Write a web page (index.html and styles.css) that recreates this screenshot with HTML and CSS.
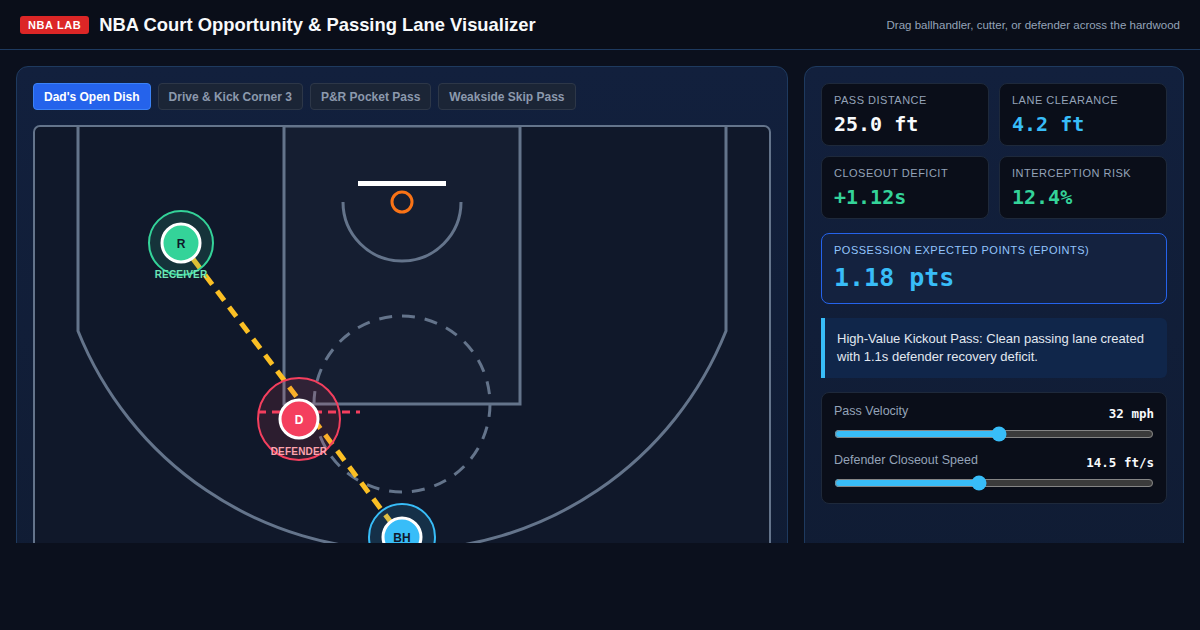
FILE: index.html
```html
<!DOCTYPE html>
<html>
  <head>
    <meta charset="UTF-8">
    <title>NBA Lab | Court Opportunity &amp; Passing Lane Visualizer</title>
    <link rel="stylesheet" href="styles.css">
  </head>
  <body>
    <div class="topbar">
      <div class="brand">
        <span class="badge">NBA LAB</span>
        <h1>NBA Court Opportunity &amp; Passing Lane Visualizer</h1>
      </div>
      <div class="hint">Drag ballhandler, cutter, or defender across the hardwood</div>
    </div>

    <div class="main">
      <div class="panel court-panel">
        <div class="tabs">
          <button class="tab active">Dad's Open Dish</button>
          <button class="tab">Drive &amp; Kick Corner 3</button>
          <button class="tab">P&amp;R Pocket Pass</button>
          <button class="tab">Weakside Skip Pass</button>
        </div>

        <svg class="court" width="738" height="690" viewBox="0 0 738 690">
          <rect x="1" y="1" width="736" height="688" rx="6" fill="#10182a" stroke="#64748b" stroke-width="2"/>
          <!-- paint -->
          <rect x="251" y="1" width="236" height="278" fill="#151e31" stroke="#64748b" stroke-width="3"/>
          <!-- three point line -->
          <path d="M45 1 L45 206 A349 349 0 0 0 693 206 L693 1" fill="none" stroke="#64748b" stroke-width="3"/>
          <!-- free throw circle -->
          <circle cx="369" cy="279" r="88" fill="none" stroke="#64748b" stroke-width="3" stroke-dasharray="13 10"/>
          <!-- restricted area -->
          <path d="M310 77 A59 59 0 0 0 428 77" fill="none" stroke="#64748b" stroke-width="3"/>
          <rect x="325" y="56" width="88" height="5" fill="#ffffff"/>
          <circle cx="369" cy="77" r="10" fill="none" stroke="#f97316" stroke-width="3"/>

          <!-- passing lane -->
          <line x1="148" y1="118" x2="369" y2="412" stroke="#fbbf24" stroke-width="5" stroke-dasharray="12 8"/>

          <!-- receiver -->
          <circle cx="148" cy="118" r="32" fill="rgba(52,211,153,0.15)" stroke="#34d399" stroke-width="2"/>
          <circle cx="148" cy="118" r="19" fill="#34d399" stroke="#ffffff" stroke-width="3"/>
          <text class="tok dark" x="148" y="119">R</text>
          <text class="tag" x="148" y="153" fill="#6ee7b7">RECEIVER</text>

          <!-- defender -->
          <circle cx="266" cy="294" r="41" fill="rgba(244,63,94,0.12)" stroke="#f43f5e" stroke-width="2"/>
          <line x1="225" y1="287" x2="327" y2="287" stroke="#f43f5e" stroke-width="3" stroke-dasharray="8 6"/>
          <circle cx="266" cy="294" r="19" fill="#f43f5e" stroke="#ffffff" stroke-width="3"/>
          <text class="tok" x="266" y="295" fill="#ffffff">D</text>
          <text class="tag" x="266" y="330" fill="#fda4af">DEFENDER</text>

          <!-- ballhandler -->
          <circle cx="369" cy="412" r="33" fill="rgba(56,189,248,0.15)" stroke="#38bdf8" stroke-width="2"/>
          <circle cx="369" cy="412" r="19" fill="#38bdf8" stroke="#ffffff" stroke-width="3"/>
          <text class="tok dark" x="369" y="413">BH</text>
        </svg>
      </div>

      <div class="panel side-panel">
        <div class="stats">
          <div class="stat">
            <div class="stat-label">Pass Distance</div>
            <div class="stat-value">25.0 ft</div>
          </div>
          <div class="stat">
            <div class="stat-label">Lane Clearance</div>
            <div class="stat-value sky">4.2 ft</div>
          </div>
          <div class="stat">
            <div class="stat-label">Closeout Deficit</div>
            <div class="stat-value green">+1.12s</div>
          </div>
          <div class="stat">
            <div class="stat-label">Interception Risk</div>
            <div class="stat-value green">12.4%</div>
          </div>
        </div>

        <div class="epoints">
          <div class="stat-label blue">Possession Expected Points (ePoints)</div>
          <div class="epoints-value">1.18 pts</div>
        </div>

        <div class="insight">High-Value Kickout Pass: Clean passing lane created with 1.1s defender recovery deficit.</div>

        <div class="controls">
          <div class="control">
            <div class="control-head">
              <span>Pass Velocity</span>
              <b>32 mph</b>
            </div>
            <input type="range" min="15" max="48" value="32">
          </div>
          <div class="control">
            <div class="control-head">
              <span>Defender Closeout Speed</span>
              <b>14.5 ft/s</b>
            </div>
            <input type="range" min="10" max="20" step="0.5" value="14.5">
          </div>
        </div>
      </div>
    </div>
  </body>
</html>
```

FILE: styles.css
```css
body { margin: 0; background: #0b101d; color: #e2e8f0; font-family: "Liberation Sans", Arial, sans-serif; }

.topbar { display: flex; align-items: center; justify-content: space-between; height: 49px; padding: 0 20px; background: #0a0e19; border-bottom: 1px solid #1e3a5f; }
.brand { display: flex; align-items: center; gap: 10px; }
.badge { background: #dc2626; color: #fff; font-size: 11px; font-weight: bold; letter-spacing: 0.6px; padding: 3px 8px; border-radius: 3px; }
h1 { margin: 0; font-size: 18.4px; font-weight: bold; color: #f8fafc; }
.hint { font-size: 11.5px; color: #94a3b8; }

.main { display: grid; grid-template-columns: 1fr 380px; gap: 16px; height: 493px; padding: 16px 16px 0; box-sizing: border-box; overflow: hidden; }
.panel { border: 1px solid #1e3a5f; border-radius: 12px; background: linear-gradient(180deg, #12203d, #0f1a2f); padding: 16px; }

.tabs { display: flex; gap: 7px; margin-bottom: 15px; }
.tab { font: bold 12px "Liberation Sans", Arial, sans-serif; height: 27px; padding: 0 10px; border-radius: 4px; border: 1px solid #2d3748; background: #1b2536; color: #8c99ad; }
.tab.active { background: #2563eb; border-color: #3b82f6; color: #fff; }
.court { display: block; }
.tok { font: bold 12px "Liberation Sans", Arial, sans-serif; text-anchor: middle; dominant-baseline: central; }
.tok.dark { fill: #0f172a; }
.tag { font: bold 10px "Liberation Sans", Arial, sans-serif; text-anchor: middle; letter-spacing: 0.2px; }

.stats { display: grid; grid-template-columns: 1fr 1fr; gap: 10px; }
.stat { background: #0a0e19; border: 1px solid #1e293b; border-radius: 8px; padding: 10px 12px 10px; height: 41px; }
.stat-label { font-size: 11px; letter-spacing: 0.5px; text-transform: uppercase; color: #94a3b8; }
.stat-label.blue { color: #93c5fd; }
.stat-value { margin-top: 6px; font: bold 20px "DejaVu Sans Mono", monospace; color: #f8fafc; }
.sky { color: #38bdf8 !important; }
.green { color: #34d399 !important; }

.epoints { margin-top: 14px; border: 1px solid #2563eb; border-radius: 8px; background: #14223f; padding: 10px 12px; height: 49px; }
.epoints-value { margin-top: 7px; font: bold 25px "DejaVu Sans Mono", monospace; color: #38bdf8; }

.insight { margin-top: 14px; background: #10264a; border-left: 4px solid #38bdf8; border-radius: 0 6px 6px 0; padding: 12px 12px 12px; font-size: 13px; line-height: 18px; color: #e2e8f0; }

.controls { margin-top: 14px; background: #0a0e19; border: 1px solid #1e293b; border-radius: 8px; padding: 11px 12px 12px; }
.control + .control { margin-top: 11px; }
.control-head { display: flex; justify-content: space-between; align-items: flex-start; font-size: 12.5px; line-height: 15px; color: #94a3b8; }
.control-head b { font: bold 12.5px "DejaVu Sans Mono", monospace; line-height: 15px; color: #f8fafc; margin-top: 2px; }
input[type=range] { display: block; width: 100%; height: 16px; margin: 5px 0 0; accent-color: #38bdf8; color-scheme: dark; }
```
